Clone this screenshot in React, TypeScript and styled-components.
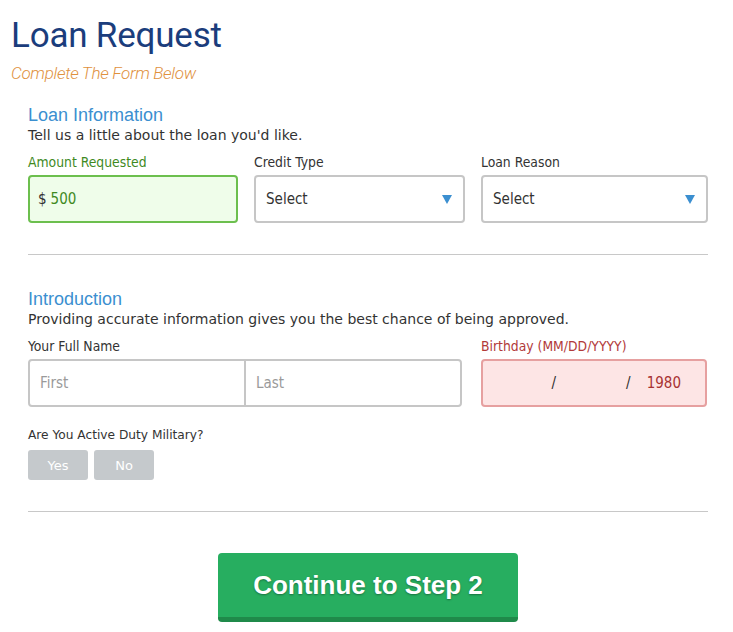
import styled, { createGlobalStyle } from "styled-components";
import { FC } from "react";

const GlobalStyle = createGlobalStyle`
  html, body {
    margin: 0;
    padding: 0;
    background: #ffffff;
  }
  * {
    box-sizing: border-box;
  }
`;

const App: FC = () => {
  return (
    <Page>
      <GlobalStyle />
      <Title>Loan Request</Title>
      <Subtitle>Complete The Form Below</Subtitle>

      <Form>
        <Section>
          <SectionTitle>Loan Information</SectionTitle>
          <SectionText>Tell us a little about the loan you'd like.</SectionText>
          <Row>
            <Field>
              <Label tone="valid">Amount Requested</Label>
              <InputBox tone="valid">
                <Prefix>$</Prefix>
                <Value tone="valid">500</Value>
              </InputBox>
            </Field>
            <Field>
              <Label>Credit Type</Label>
              <InputBox>
                <Value>Select</Value>
                <Caret />
              </InputBox>
            </Field>
            <Field>
              <Label>Loan Reason</Label>
              <InputBox>
                <Value>Select</Value>
                <Caret />
              </InputBox>
            </Field>
          </Row>
        </Section>

        <Divider />

        <Section>
          <SectionTitle>Introduction</SectionTitle>
          <SectionText>
            Providing accurate information gives you the best chance of being
            approved.
          </SectionText>
          <NameRow>
            <Field>
              <Label>Your Full Name</Label>
              <SplitBox>
                <SplitPart>
                  <Placeholder>First</Placeholder>
                </SplitPart>
                <SplitPart>
                  <Placeholder>Last</Placeholder>
                </SplitPart>
              </SplitBox>
            </Field>
            <Field>
              <Label tone="error">Birthday (MM/DD/YYYY)</Label>
              <InputBox tone="error">
                <DateParts>
                  <DateSlash>/</DateSlash>
                  <DateSlash>/</DateSlash>
                  <Value tone="error">1980</Value>
                </DateParts>
              </InputBox>
            </Field>
          </NameRow>

          <Question>Are You Active Duty Military?</Question>
          <Toggles>
            <Toggle>Yes</Toggle>
            <Toggle>No</Toggle>
          </Toggles>
        </Section>

        <Divider />

        <Actions>
          <SubmitButton>Continue to Step 2</SubmitButton>
        </Actions>
      </Form>
    </Page>
  );
};

/** Styled Components */
type Tone = "valid" | "error" | undefined;

const labelColor = (tone: Tone) =>
  tone === "valid" ? "#3f8a1f" : tone === "error" ? "#b23a3a" : "#333333";

const Page = styled.div`
  width: 733px;
  min-height: 632px;
  padding: 14px 25px 0 11px;
`;

const Title = styled.h1`
  margin: 0;
  font-family: Roboto, "Liberation Sans", sans-serif;
  font-weight: 400;
  font-size: 35px;
  line-height: 44px;
  color: #1b3d7c;
  letter-spacing: -0.2px;
`;

const Subtitle = styled.div`
  margin-top: 4px;
  font-family: Roboto, "Liberation Sans", sans-serif;
  font-weight: 300;
  font-style: italic;
  font-size: 17px;
  line-height: 22px;
  color: #e0913d;
  letter-spacing: -0.3px;
`;

const Form = styled.div`
  padding-left: 17px;
  padding-top: 20px;
`;

const Section = styled.div`
  display: flex;
  flex-direction: column;
`;

const SectionTitle = styled.div`
  font-family: "Liberation Sans", Arial, sans-serif;
  font-size: 18px;
  line-height: 22px;
  color: #3b8fd0;
`;

const SectionText = styled.div`
  font-family: "DejaVu Sans", Verdana, sans-serif;
  font-size: 14px;
  line-height: 18px;
  color: #333333;
  margin-bottom: 10px;
`;

const Row = styled.div`
  display: grid;
  grid-template-columns: 210px 211px 227px;
  gap: 16px;
`;

const NameRow = styled.div`
  display: grid;
  grid-template-columns: 434px 226px;
  gap: 19px;
`;

const Field = styled.div`
  display: flex;
  flex-direction: column;
`;

const Label = styled.div<{ tone?: Tone }>`
  font-family: "DejaVu Sans Condensed", "DejaVu Sans", sans-serif;
  font-size: 13.8px;
  line-height: 17px;
  color: ${({ tone }) => labelColor(tone)};
  margin-bottom: 4px;
`;

const InputBox = styled.div<{ tone?: Tone }>`
  height: 48px;
  display: flex;
  align-items: center;
  padding: 0 10px 0 8px;
  border: 2px solid
    ${({ tone }) =>
      tone === "valid" ? "#6cbf4e" : tone === "error" ? "#e6a0a0" : "#c6c6c6"};
  border-radius: 4px;
  background: ${({ tone }) =>
    tone === "valid" ? "#effdea" : tone === "error" ? "#fde5e5" : "#ffffff"};
`;

const Prefix = styled.span`
  font-family: "DejaVu Sans Condensed", "DejaVu Sans", sans-serif;
  font-size: 15px;
  color: #333333;
  margin-right: 4px;
`;

const Value = styled.span<{ tone?: Tone }>`
  font-family: "DejaVu Sans Condensed", "DejaVu Sans", sans-serif;
  font-size: 15px;
  color: ${({ tone }) =>
    tone === "valid" ? "#3f8a1f" : tone === "error" ? "#a83232" : "#333333"};
  padding-left: ${({ tone }) => (tone ? "0" : "2px")};
  flex: ${({ tone }) => (tone === "error" ? "0 0 auto" : "1")};
`;

const Caret = styled.span`
  width: 0;
  height: 0;
  border-left: 5px solid transparent;
  border-right: 5px solid transparent;
  border-top: 9px solid #3b8fd0;
  margin-right: 1px;
`;

const SplitBox = styled.div`
  height: 48px;
  display: grid;
  grid-template-columns: 214px 1fr;
  border: 2px solid #c6c6c6;
  border-radius: 4px;
  background: #ffffff;
`;

const SplitPart = styled.div`
  display: flex;
  align-items: center;
  padding-left: 10px;
  & + & {
    border-left: 2px solid #c6c6c6;
  }
`;

const Placeholder = styled.span`
  font-family: "DejaVu Sans Condensed", "DejaVu Sans", sans-serif;
  font-size: 15px;
  color: #9a9a9a;
`;

const DateParts = styled.div`
  flex: 1;
  display: flex;
  align-items: center;
  justify-content: flex-end;
  padding-right: 14px;
`;

const DateSlash = styled.span`
  font-family: "DejaVu Sans Condensed", "DejaVu Sans", sans-serif;
  font-size: 15px;
  color: #333333;
  &:first-child {
    margin-right: 70px;
  }
  & + & {
    margin-right: 16px;
  }
`;

const Question = styled.div`
  margin-top: 20px;
  font-family: "DejaVu Sans", Verdana, sans-serif;
  font-size: 12.2px;
  line-height: 16px;
  color: #333333;
  margin-bottom: 7px;
`;

const Toggles = styled.div`
  display: flex;
  gap: 6px;
`;

const Toggle = styled.button`
  width: 60px;
  height: 30px;
  border: none;
  border-radius: 3px;
  background: #c5c9cc;
  color: #ffffff;
  font-family: "DejaVu Sans", Verdana, sans-serif;
  font-size: 13px;
  padding: 0;
  cursor: pointer;
`;

const Divider = styled.hr`
  width: 680px;
  margin: 31px 0 33px;
  border: none;
  border-top: 1px solid #c8c8c8;
  height: 0;
`;

const Actions = styled.div`
  display: flex;
  padding-left: 190px;
  padding-top: 8px;
`;

const SubmitButton = styled.button`
  width: 300px;
  height: 69px;
  border: none;
  border-bottom: 5px solid #1f8a4a;
  border-radius: 4px;
  background: #27ae60;
  color: #ffffff;
  font-family: "Liberation Sans", Arial, sans-serif;
  font-weight: 700;
  font-size: 26px;
  text-shadow: 0 1px 2px rgba(0, 0, 0, 0.35);
  cursor: pointer;
  padding: 0;
`;

export default App;
